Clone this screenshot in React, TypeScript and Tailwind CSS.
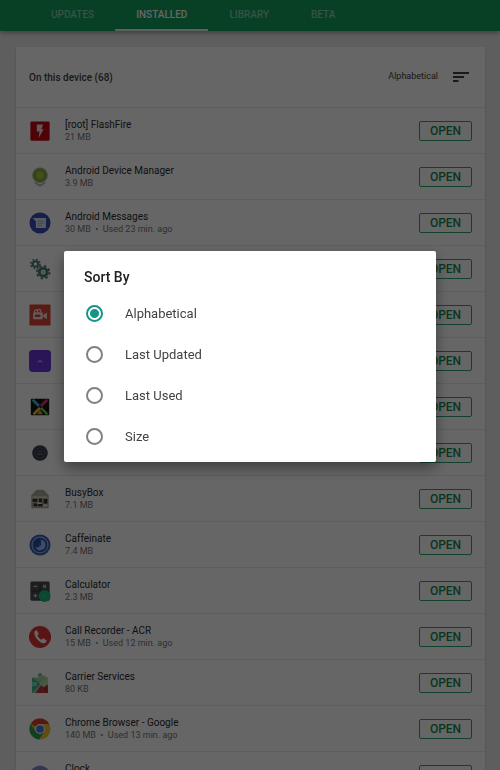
import { useState, type ReactNode } from "react";

const tabs = ["UPDATES", "INSTALLED", "LIBRARY", "BETA"];

const sortOptions = ["Alphabetical", "Last Updated", "Last Used", "Size"];

const icons: Record<string, ReactNode> = {
  flash: (
    <>
      <rect x="1.500" y="1.500" width="21" height="21" rx="1.500" fill="#c40a10" />
      <path d="M8.500 5h7l-2 5H16l-5.500 9.500 1-7H8.500z" fill="#f3dede" />
    </>
  ),
  device: (
    <>
      <path d="M5.500 17l6.500 3 6.500-3v1.500L12 23l-6.500-4.500z" fill="#bdbdbd" />
      <circle cx="12" cy="10" r="8.500" fill="#a5ad97" />
      <circle cx="12" cy="10" r="7.200" fill="#80ad35" />
      <circle cx="12" cy="10" r="4" fill="#a4c84a" />
    </>
  ),
  messages: (
    <>
      <circle cx="12" cy="12" r="11.500" fill="#3350b8" />
      <path d="M4 6.500h14.500v11H7.500V10z" fill="#dfe3f3" />
      <path d="M9.500 10h6.500M9.500 12.300h6.500M9.500 14.600h4.500" stroke="#9aa6d4" strokeWidth="1" />
    </>
  ),
  gears: (
    <g fill="none" stroke="#4c8078">
      <circle cx="7" cy="6.500" r="3" strokeWidth="2.200" />
      <circle cx="7" cy="6.500" r="5" strokeWidth="1.700" strokeDasharray="2 1.930" />
      <circle cx="15.500" cy="15.500" r="4.300" strokeWidth="3.400" />
      <circle cx="15.500" cy="15.500" r="6.900" strokeWidth="2" strokeDasharray="2.700 2.720" />
      <circle cx="15.500" cy="15.500" r="1.200" fill="#8fb8b0" stroke="none" />
    </g>
  ),
  recorder: (
    <>
      <rect x="0.500" y="0.500" width="23" height="23" rx="1" fill="#dd4536" />
      <path d="M6 9.500V8a1.500 1.500 0 0 1 3 0M9.500 9V7.500a1.700 1.700 0 0 1 3.400 0V9" fill="none" stroke="#f5e4e2" strokeWidth="1.300" />
      <rect x="4.500" y="9" width="10.500" height="7.500" rx="1" fill="#f5e4e2" />
      <path d="M15.500 12l4-2.700v7.400l-4-2.700z" fill="#f5e4e2" />
      <path d="M6.500 11.500h6v2.700h-6z" fill="#dd4536" />
    </>
  ),
  launcher: (
    <>
      <rect width="24" height="24" rx="4" fill="#6a35dc" />
      <path d="M9.500 13.500l2.500-2 2.500 2" fill="none" stroke="#bda5f3" strokeWidth="1.200" />
    </>
  ),
  cross: (
    <>
      <rect x="2" y="3" width="20" height="18" rx="1" fill="#161616" />
      <path d="M4 4l7 7" stroke="#43b7c4" strokeWidth="3" />
      <path d="M20 4l-7 7" stroke="#e0356a" strokeWidth="3" />
      <path d="M12 13l-7 7" stroke="#e8c53a" strokeWidth="3" />
      <path d="M13 13l7 7" stroke="#7fc454" strokeWidth="2.500" />
      <path d="M9 20l3-5 3 5z" fill="#e8a03a" />
    </>
  ),
  orb: (
    <>
      <circle cx="12" cy="12" r="8.500" fill="#3a3e4c" />
      <circle cx="12" cy="12" r="5.500" fill="none" stroke="#4d5262" strokeWidth="1.200" />
      <path d="M8.500 13.500h7M10 10.500h4" stroke="#5d6374" strokeWidth="1.200" />
    </>
  ),
  busybox: (
    <>
      <path d="M2.500 8L8 2h8l5.500 6v14h-19z" fill="#a9a697" />
      <path d="M4 9h16v2H4z" fill="#d5d1c0" />
      <path d="M4 12h5v3H4zM11 11.500h3v4h-3zM16 12h4v5h-4zM5 17h4v3H5zM10 17h5v3h-5z" fill="#33302b" />
      <path d="M9 16h5v1.500H9zM15 18h5v2h-5z" fill="#eeeadb" />
    </>
  ),
  caffeinate: (
    <>
      <circle cx="12" cy="12" r="11.500" fill="#3b62b4" />
      <circle cx="12" cy="12" r="8.600" fill="#2450b0" stroke="#9db0de" strokeWidth="1.300" />
      <path d="M12.500 6.200a5.800 5.800 0 1 1-5.500 8.300c3.500 0 5.500-3 5.500-8.300z" fill="#a3b9ea" />
      <path d="M12.500 7v5l-4 2.500" fill="none" stroke="#2450b0" strokeWidth="1.300" />
    </>
  ),
  calculator: (
    <>
      <rect x="1.500" y="1.500" width="21" height="21" rx="1.500" fill="#494d4f" />
      <path d="M12 2v20M2 12h20" stroke="#303335" />
      <path d="M5 7h4M15.500 5.500l3 3M18.500 5.500l-3 3M7 15v4M5 17h4" stroke="#c6c6c6" strokeWidth="1.300" />
      <circle cx="17" cy="17.500" r="6.500" fill="#1bb77c" />
      <path d="M14.500 16.500h5M14.500 19h5" stroke="#37c890" strokeWidth="1" />
    </>
  ),
  phone: (
    <>
      <circle cx="12" cy="12" r="12" fill="#df3538" />
      <path
        d="M6.500 5.500l2-1 2.300 4.200-1.800 1.500c1 2.200 2.500 3.800 4.700 4.900l1.600-1.700 4 2.500-1 2.100c-1 1.200-2.800 1.200-5.300-.1-3-1.600-5.600-4.500-6.700-7.700-.7-2.200-.7-3.800.2-4.700z"
        fill="#fff"
      />
    </>
  ),
  carrier: (
    <>
      <path d="M3.500 6h17v17h-17z" fill="#8fd0ae" />
      <path d="M3.500 6l9 7-9 10z" fill="#3fae90" />
      <path d="M3.500 11h5v4.500h-5z" fill="#86ddbe" />
      <path d="M11 12L20.500 6v16z" fill="#b9d8a6" />
      <path d="M13 14.500L20.500 20v3H7z" fill="#c9333e" />
      <path d="M15 17.500l5.500-4V23z" fill="#9c3035" />
      <circle cx="12" cy="3.500" r="2.300" fill="#7dbd7d" />
      <path d="M12 4h6v4h-5z" fill="#a9cf8b" />
    </>
  ),
  chrome: (
    <>
      <circle cx="12" cy="12" r="11.500" fill="#f2c02e" />
      <path d="M12 12L2 6.300A11.500 11.500 0 0 1 22 6.500H12z" fill="#d93a2f" />
      <path d="M2 6.300A11.500 11.500 0 0 0 11 23.500l5.500-8.500L7.200 14.800z" fill="#2f9e50" />
      <circle cx="12" cy="12" r="5.400" fill="#f4f4f4" />
      <circle cx="12" cy="12" r="4.200" fill="#3f7ae0" />
    </>
  ),
  clock: (
    <>
      <circle cx="12" cy="12" r="10.500" fill="#8a88d4" />
      <path d="M12 8v4l4 3" fill="none" stroke="#fff" strokeWidth="1.800" />
    </>
  ),
};

const apps = [
  { name: "[root] FlashFire", meta: "21 MB", icon: "flash" },
  { name: "Android Device Manager", meta: "3.9 MB", icon: "device" },
  { name: "Android Messages", meta: "30 MB  •  Used 23 min. ago", icon: "messages" },
  { name: "", meta: "", icon: "gears" },
  { name: "", meta: "", icon: "recorder" },
  { name: "", meta: "", icon: "launcher" },
  { name: "", meta: "", icon: "cross" },
  { name: "", meta: "", icon: "orb" },
  { name: "BusyBox", meta: "7.1 MB", icon: "busybox" },
  { name: "Caffeinate", meta: "7.4 MB", icon: "caffeinate" },
  { name: "Calculator", meta: "2.3 MB", icon: "calculator" },
  { name: "Call Recorder - ACR", meta: "15 MB  •  Used 12 min. ago", icon: "phone" },
  { name: "Carrier Services", meta: "80 KB", icon: "carrier" },
  { name: "Chrome Browser - Google", meta: "140 MB  •  Used 13 min. ago", icon: "chrome" },
  { name: "Clock", meta: " ", icon: "clock" },
];

function TabBar() {
  return (
    <nav className="relative flex bg-[#12a05c] pl-[30px] shadow-[0_2px_5px_rgba(0,0,0,0.35)]">
      {tabs.map((tab) => (
        <button
          key={tab}
          className={
            tab === "INSTALLED"
              ? "h-[31px] border-b-2 border-white/90 px-[21px] pb-px text-[10px] font-medium text-white"
              : "h-[31px] border-b-2 border-transparent px-[21px] pb-px text-[10px] font-medium text-white/50"
          }
        >
          {tab}
        </button>
      ))}
    </nav>
  );
}

function AppRow({ name, meta, icon }: (typeof apps)[number]) {
  return (
    <li className="flex h-[46px] items-center border-t border-[#ebebeb] px-[13px]">
      <svg viewBox="0 0 24 24" className="size-[22px] shrink-0" aria-hidden="true">
        {icons[icon]}
      </svg>
      <div className="ml-[14px] min-w-0 flex-1">
        <p className="truncate text-[10px] leading-3 text-[#2b2b2b]">{name}</p>
        <p className="truncate text-[9px] leading-3 whitespace-pre text-[#757575]">{meta}</p>
      </div>
      <button className="h-5 w-[53px] rounded-[2px] border border-[#2fa46b] pt-px text-[12px] leading-4 font-medium text-[#128a50]">
        OPEN
      </button>
    </li>
  );
}

function SortDialog() {
  const [sort, setSort] = useState("Alphabetical");

  return (
    <div className="fixed inset-0 flex items-center bg-black/60 px-16 pb-[57px]">
      <div
        role="dialog"
        aria-modal="true"
        aria-labelledby="sort-title"
        className="w-full rounded-[2px] bg-white pt-4 pb-[5px] shadow-[0_6px_14px_rgba(0,0,0,0.4)]"
      >
        <h2 id="sort-title" className="px-5 pb-1.5 text-[14px] leading-5 font-medium text-[#212121]">
          Sort By
        </h2>
        {sortOptions.map((option) => (
          <label key={option} className="flex h-[41px] items-center gap-[22px] px-[22px] text-[13px] text-[#424242]">
            <input
              type="radio"
              name="sort"
              checked={sort === option}
              onChange={() => setSort(option)}
              className="size-[17px] appearance-none rounded-full border-2 border-[#808080] checked:border-[#159588] checked:bg-[radial-gradient(circle,#159588_4px,white_5px)]"
            />
            {option}
          </label>
        ))}
      </div>
    </div>
  );
}

export default function App() {
  return (
    <div className="h-screen overflow-hidden bg-[#ececec] font-[Roboto,sans-serif]">
      <TabBar />
      <main className="mr-[15px] ml-4 mt-4 bg-white shadow-[0_1px_2px_rgba(0,0,0,0.2)]">
        <div className="flex h-[60px] items-center pr-[15px] pl-[13px]">
          <h1 className="flex-1 text-[10px] font-medium text-[#424242]">On this device (68)</h1>
          <span className="text-[9px] text-[#424242]">Alphabetical</span>
          <button aria-label="Sort" className="ml-[15px]">
            <svg viewBox="0 0 17 12" className="h-3 w-[17px]" aria-hidden="true">
              <path d="M0 2h16M0 6h11M0 10h5.500" stroke="#424242" strokeWidth="2" />
            </svg>
          </button>
        </div>
        <ul>
          {apps.map((app) => (
            <AppRow key={app.icon} {...app} />
          ))}
        </ul>
      </main>
      <SortDialog />
    </div>
  );
}
